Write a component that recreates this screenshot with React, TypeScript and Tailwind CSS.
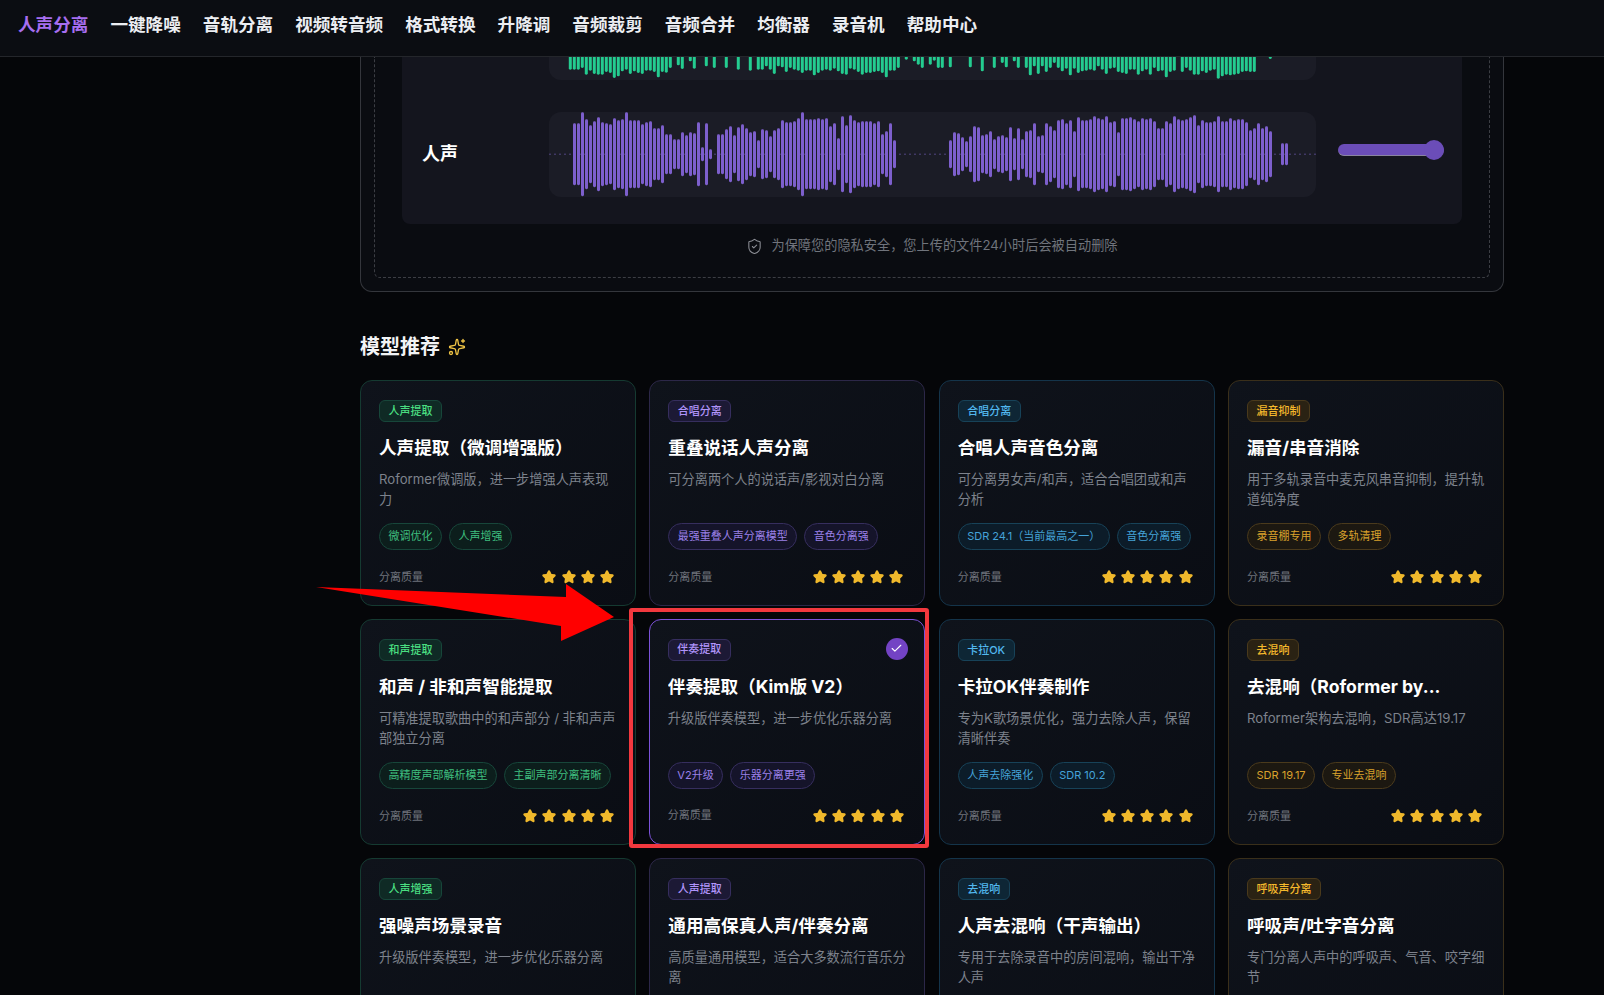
import { Check, ShieldCheck, Sparkles, Star } from 'lucide-react'

const navItems = ['人声分离', '一键降噪', '音轨分离', '视频转音频', '格式转换', '升降调', '音频裁剪', '音频合并', '均衡器', '录音机', '帮助中心']

const themes = {
    green: {
        card: 'border-[#153a31]',
        tag: 'border-[#17463a] bg-[#0f2a25] text-[#4ade80]',
        pill: 'border-[#17463a] bg-[#0c1e1c] text-[#3fbf7f]',
    },
    purple: {
        card: 'border-[#2c2748]',
        tag: 'border-[#362e5e] bg-[#1c1935] text-[#b094fa]',
        pill: 'border-[#362e5e] bg-[#15142a] text-[#9a80e8]',
    },
    blue: {
        card: 'border-[#14344a]',
        tag: 'border-[#174258] bg-[#0e2635] text-[#52b8ef]',
        pill: 'border-[#174258] bg-[#0c1c29] text-[#45a3d8]',
    },
    amber: {
        card: 'border-[#3a2f1a]',
        tag: 'border-[#4a3a1c] bg-[#2a2213] text-[#f5b92c]',
        pill: 'border-[#4a3a1c] bg-[#1c1811] text-[#d9a12c]',
    },
}

type Theme = keyof typeof themes

type Model = {
    theme: Theme
    tag: string
    title: string
    desc: string
    pills: string[]
    stars: number
    selected?: boolean
}

const models: Model[] = [
    { theme: 'green', tag: '人声提取', title: '人声提取（微调增强版）', desc: 'Roformer微调版，进一步增强人声表现力', pills: ['微调优化', '人声增强'], stars: 4 },
    { theme: 'purple', tag: '合唱分离', title: '重叠说话人声分离', desc: '可分离两个人的说话声/影视对白分离', pills: ['最强重叠人声分离模型', '音色分离强'], stars: 5 },
    { theme: 'blue', tag: '合唱分离', title: '合唱人声音色分离', desc: '可分离男女声/和声，适合合唱团或和声分析', pills: ['SDR 24.1（当前最高之一）', '音色分离强'], stars: 5 },
    { theme: 'amber', tag: '漏音抑制', title: '漏音/串音消除', desc: '用于多轨录音中麦克风串音抑制，提升轨道纯净度', pills: ['录音棚专用', '多轨清理'], stars: 5 },
    { theme: 'green', tag: '和声提取', title: '和声 / 非和声智能提取', desc: '可精准提取歌曲中的和声部分 / 非和声声部独立分离', pills: ['高精度声部解析模型', '主副声部分离清晰'], stars: 5 },
    { theme: 'purple', tag: '伴奏提取', title: '伴奏提取（Kim版 V2）', desc: '升级版伴奏模型，进一步优化乐器分离', pills: ['V2升级', '乐器分离更强'], stars: 5, selected: true },
    { theme: 'blue', tag: '卡拉OK', title: '卡拉OK伴奏制作', desc: '专为K歌场景优化，强力去除人声，保留清晰伴奏', pills: ['人声去除强化', 'SDR 10.2'], stars: 5 },
    { theme: 'amber', tag: '去混响', title: '去混响（Roformer by...', desc: 'Roformer架构去混响，SDR高达19.17', pills: ['SDR 19.17', '专业去混响'], stars: 5 },
    { theme: 'green', tag: '人声增强', title: '强噪声场景录音', desc: '升级版伴奏模型，进一步优化乐器分离', pills: [], stars: 0 },
    { theme: 'purple', tag: '人声提取', title: '通用高保真人声/伴奏分离', desc: '高质量通用模型，适合大多数流行音乐分离', pills: [], stars: 0 },
    { theme: 'blue', tag: '去混响', title: '人声去混响（干声输出）', desc: '专用于去除录音中的房间混响，输出干净人声', pills: [], stars: 0 },
    { theme: 'amber', tag: '呼吸声分离', title: '呼吸声/吐字音分离', desc: '专门分离人声中的呼吸声、气音、咬字细节', pills: [], stars: 0 },
]

// half heights read off the waveform, 4px pitch
const purpleBars: [number, number[]][] = [
    [0, [31, 31, 42, 35, 29, 33, 37, 32, 31, 30, 36, 34, 35, 42, 34, 34, 34, 30, 32, 33, 26, 26, 29, 20, 20, 15, 15, 22, 19, 22, 21, 32, 7, 31, 5]],
    [36, [20, 20, 25, 28, 19, 27, 30, 26, 22, 23, 14, 25, 24, 18, 24, 26, 34, 32, 32, 33, 36, 42, 35, 35, 35, 36, 35, 36, 28, 31, 16, 38, 29, 39, 34, 32, 33, 33, 33, 31, 33, 20, 23, 31, 14]],
    [94, [14, 22, 21, 17, 13, 18, 28, 27, 19, 20, 23, 15, 18, 19, 17, 27, 16, 26, 15, 23, 24, 31, 18, 19, 31, 28, 24, 34, 35, 31, 34, 23, 37, 34, 34, 35, 38, 36, 35, 38, 32, 33, 22, 36, 36, 37, 35, 33, 36, 35, 36, 33, 26, 26, 33, 31, 38, 35, 34, 35, 37, 39, 29, 34, 32, 32, 33, 38, 33, 33, 36, 34, 35, 35, 32, 24, 26, 31, 26, 28, 23]],
    [177, [11, 11]],
]

// bottom ends of the green bars, clipped at the top by the nav
const greenBars = [35, 35, 35, 30, 50, 38, 48, 50, 50, 42, 45, 60, 55, 40, 35, 48, 40, 45, 48, 38, 38, 42, 58, 42, 44, 30, 0, 22, 33, 0, 10, 32, 0, 0, 25, 0, 30, 0, 0, 30, 0, 0, 35, 0, 0, 38, 0, 35, 35, 25, 35, 48, 25, 28, 42, 30, 35, 38, 45, 38, 38, 52, 45, 38, 35, 38, 32, 40, 48, 50, 32, 35, 42, 50, 45, 45, 42, 40, 45, 58, 38, 38, 30, 0, 5, 0, 10, 20, 30, 0, 20, 8, 30, 30, 0, 28, 0, 0, 0, 0, 28, 0, 0, 40, 0, 0, 30, 0, 15, 28, 0, 10, 30, 0, 30, 52, 25, 48, 25, 42, 30, 15, 30, 40, 32, 52, 32, 45, 40, 38, 35, 38, 25, 35, 48, 32, 30, 42, 45, 48, 35, 35, 50, 40, 35, 50, 30, 40, 38, 58, 42, 38, 0, 42, 30, 38, 50, 50, 40, 45, 38, 35, 62, 55, 50, 52, 50, 48, 42, 40, 42, 42, 0, 0, 0, 3]

function PurpleWave() {
    return (
        <svg width="767" height="85" viewBox="0 0 767 85" className="block">
            <line x1="0" y1="42.2" x2="767" y2="42.2" stroke="#6a58a8" strokeWidth="1" strokeDasharray="2 3" opacity="0.7" />
            {purpleBars.map(([start, bars]) =>
                bars.map((h, i) => (
                    <rect key={start + i} x={24 + (start + i) * 4} y={42.2 - h} width="3" height={h * 2} rx="1.4" fill="#7d5fcc" />
                ))
            )}
        </svg>
    )
}

function GreenWave() {
    return (
        <svg width="767" height="23" viewBox="0 0 767 23" className="block">
            {greenBars.map((h, i) =>
                h > 0 ? <rect key={i} x={19.8 + i * 4} y={-6} width="3" height={h / 3 + 7} rx="1.4" fill="#24cc90" /> : null
            )}
        </svg>
    )
}

function Pill({ text, className }: { text: string; className: string }) {
    return <span className={`flex h-[27px] items-center whitespace-nowrap rounded-full border px-[8.5px] text-[11px] ${className}`}>{text}</span>
}

function ModelCard({ model }: { model: Model }) {
    const t = themes[model.theme]
    return (
        <div
            className={`relative h-[225.8px] rounded-xl bg-gradient-to-br from-[#0f131b] to-[#0a0d14] ${
                model.selected ? 'border-[1.5px] border-[#7c52d8] px-[17.5px] pt-[18.5px]' : `border px-[18px] pt-[19px] ${t.card}`
            }`}
        >
            <span className={`flex h-[22px] w-fit items-center rounded-md border px-[8.5px] text-[11px] font-medium ${t.tag}`}>{model.tag}</span>
            {model.selected && (
                <span className="absolute right-[16.5px] top-[17.5px] flex h-[22px] w-[22px] items-center justify-center rounded-full bg-[#7343c4]">
                    <Check size={13} strokeWidth={2} className="text-white" />
                </span>
            )}
            <h3 className="mt-[13px] truncate text-[17.6px] font-bold leading-[26px] text-white">{model.title}</h3>
            <p className="mt-[8px] h-[40px] text-[13.2px] leading-[20px] text-[#7d828c]">{model.desc}</p>
            {model.stars > 0 && (
                <>
                    <div className="mt-[14px] flex gap-[7px]">
                        {model.pills.map((p) => (
                            <Pill key={p} text={p} className={t.pill} />
                        ))}
                    </div>
                    <div className="mt-[18px] flex h-[18px] items-center justify-between pr-[3px]">
                        <span className="text-[11px] text-[#6f737c]">分离质量</span>
                        <div className="flex gap-[5.2px]">
                            {Array.from({ length: model.stars }).map((_, i) => (
                                <Star key={i} size={14} strokeWidth={3} className="fill-[#f0b92c] text-[#f0b92c]" />
                            ))}
                        </div>
                    </div>
                </>
            )}
        </div>
    )
}

export default function App() {
    return (
        <div className="relative flex h-screen flex-col overflow-hidden bg-[#050609] font-[Inter,'Noto_Sans_CJK_SC',sans-serif]">
            <nav className="flex h-[57px] shrink-0 gap-[22px] border-b border-[#24262b] bg-[#0b0d12] pl-[18px] pt-[12px]">
                {navItems.map((item, i) => (
                    <a key={item} className={`h-[26px] text-[17.6px] font-semibold leading-[26px] ${i === 0 ? 'text-[#a66ef0]' : 'text-[#eceef2]'}`}>
                        {item}
                    </a>
                ))}
            </nav>

            <main className="w-[1144px] ml-[360px]">
                <section className="rounded-b-xl border-x border-b border-[#34363c] bg-[#0a0c11] px-[13px] pb-[13px]">
                    <div className="h-[221px] rounded-b-md border-x border-b border-dashed border-[#3c3e44] px-[27px]">
                        <div className="h-[167px] rounded-b-lg bg-[#14151e]">
                            <div className="ml-[147px] h-[23px] w-[767px] overflow-hidden rounded-b-xl bg-[#1b1c26]">
                                <GreenWave />
                            </div>
                            <div className="mt-[32px] flex items-center">
                                <span className="ml-[20px] w-[127px] pb-[2px] text-[18px] font-semibold text-white">人声</span>
                                <div className="w-[767px] rounded-xl bg-[#1b1c26]">
                                    <PurpleWave />
                                </div>
                                <div className="relative ml-[22px] -mt-[10px] h-[12px] w-[106px] rounded-full border-b border-[#8a84a0] bg-[#6b4db8]">
                                    <span className="absolute -top-[4px] right-0 h-[20px] w-[20px] rounded-full bg-[#6b4db8]" />
                                </div>
                            </div>
                        </div>
                        <div className="mt-[12px] flex h-[20px] items-center justify-center gap-[8px] text-[13.2px] text-[#70747c]">
                            <ShieldCheck size={17} strokeWidth={1.5} className="text-[#8a8d94]" />
                            <span>为保障您的隐私安全，您上传的文件24小时后会被自动删除</span>
                        </div>
                    </div>
                </section>

                <h2 className="mt-[41px] flex h-[28px] items-center gap-[8px] text-[20px] font-bold leading-[28px] text-[#f2f3f5]">
                    模型推荐
                    <Sparkles size={18} strokeWidth={1.75} className="text-[#f0c445]" />
                </h2>

                <div className="mt-[19px] grid grid-cols-4 gap-[13.33px]">
                    {models.map((m) => (
                        <ModelCard key={m.title} model={m} />
                    ))}
                </div>
            </main>

            {/* annotations pasted over the screenshot */}
            <div className="absolute left-[629px] top-[608px] h-[240px] w-[300px] rounded-[3px] border-4 border-[#f2383e]" />
            <svg className="absolute left-0 top-0" width="1604" height="995" viewBox="0 0 1604 995">
                <polygon points="316,587 566,597 566,584 614,617 561,641 561,626" fill="#ff0000" />
            </svg>
        </div>
    )
}
